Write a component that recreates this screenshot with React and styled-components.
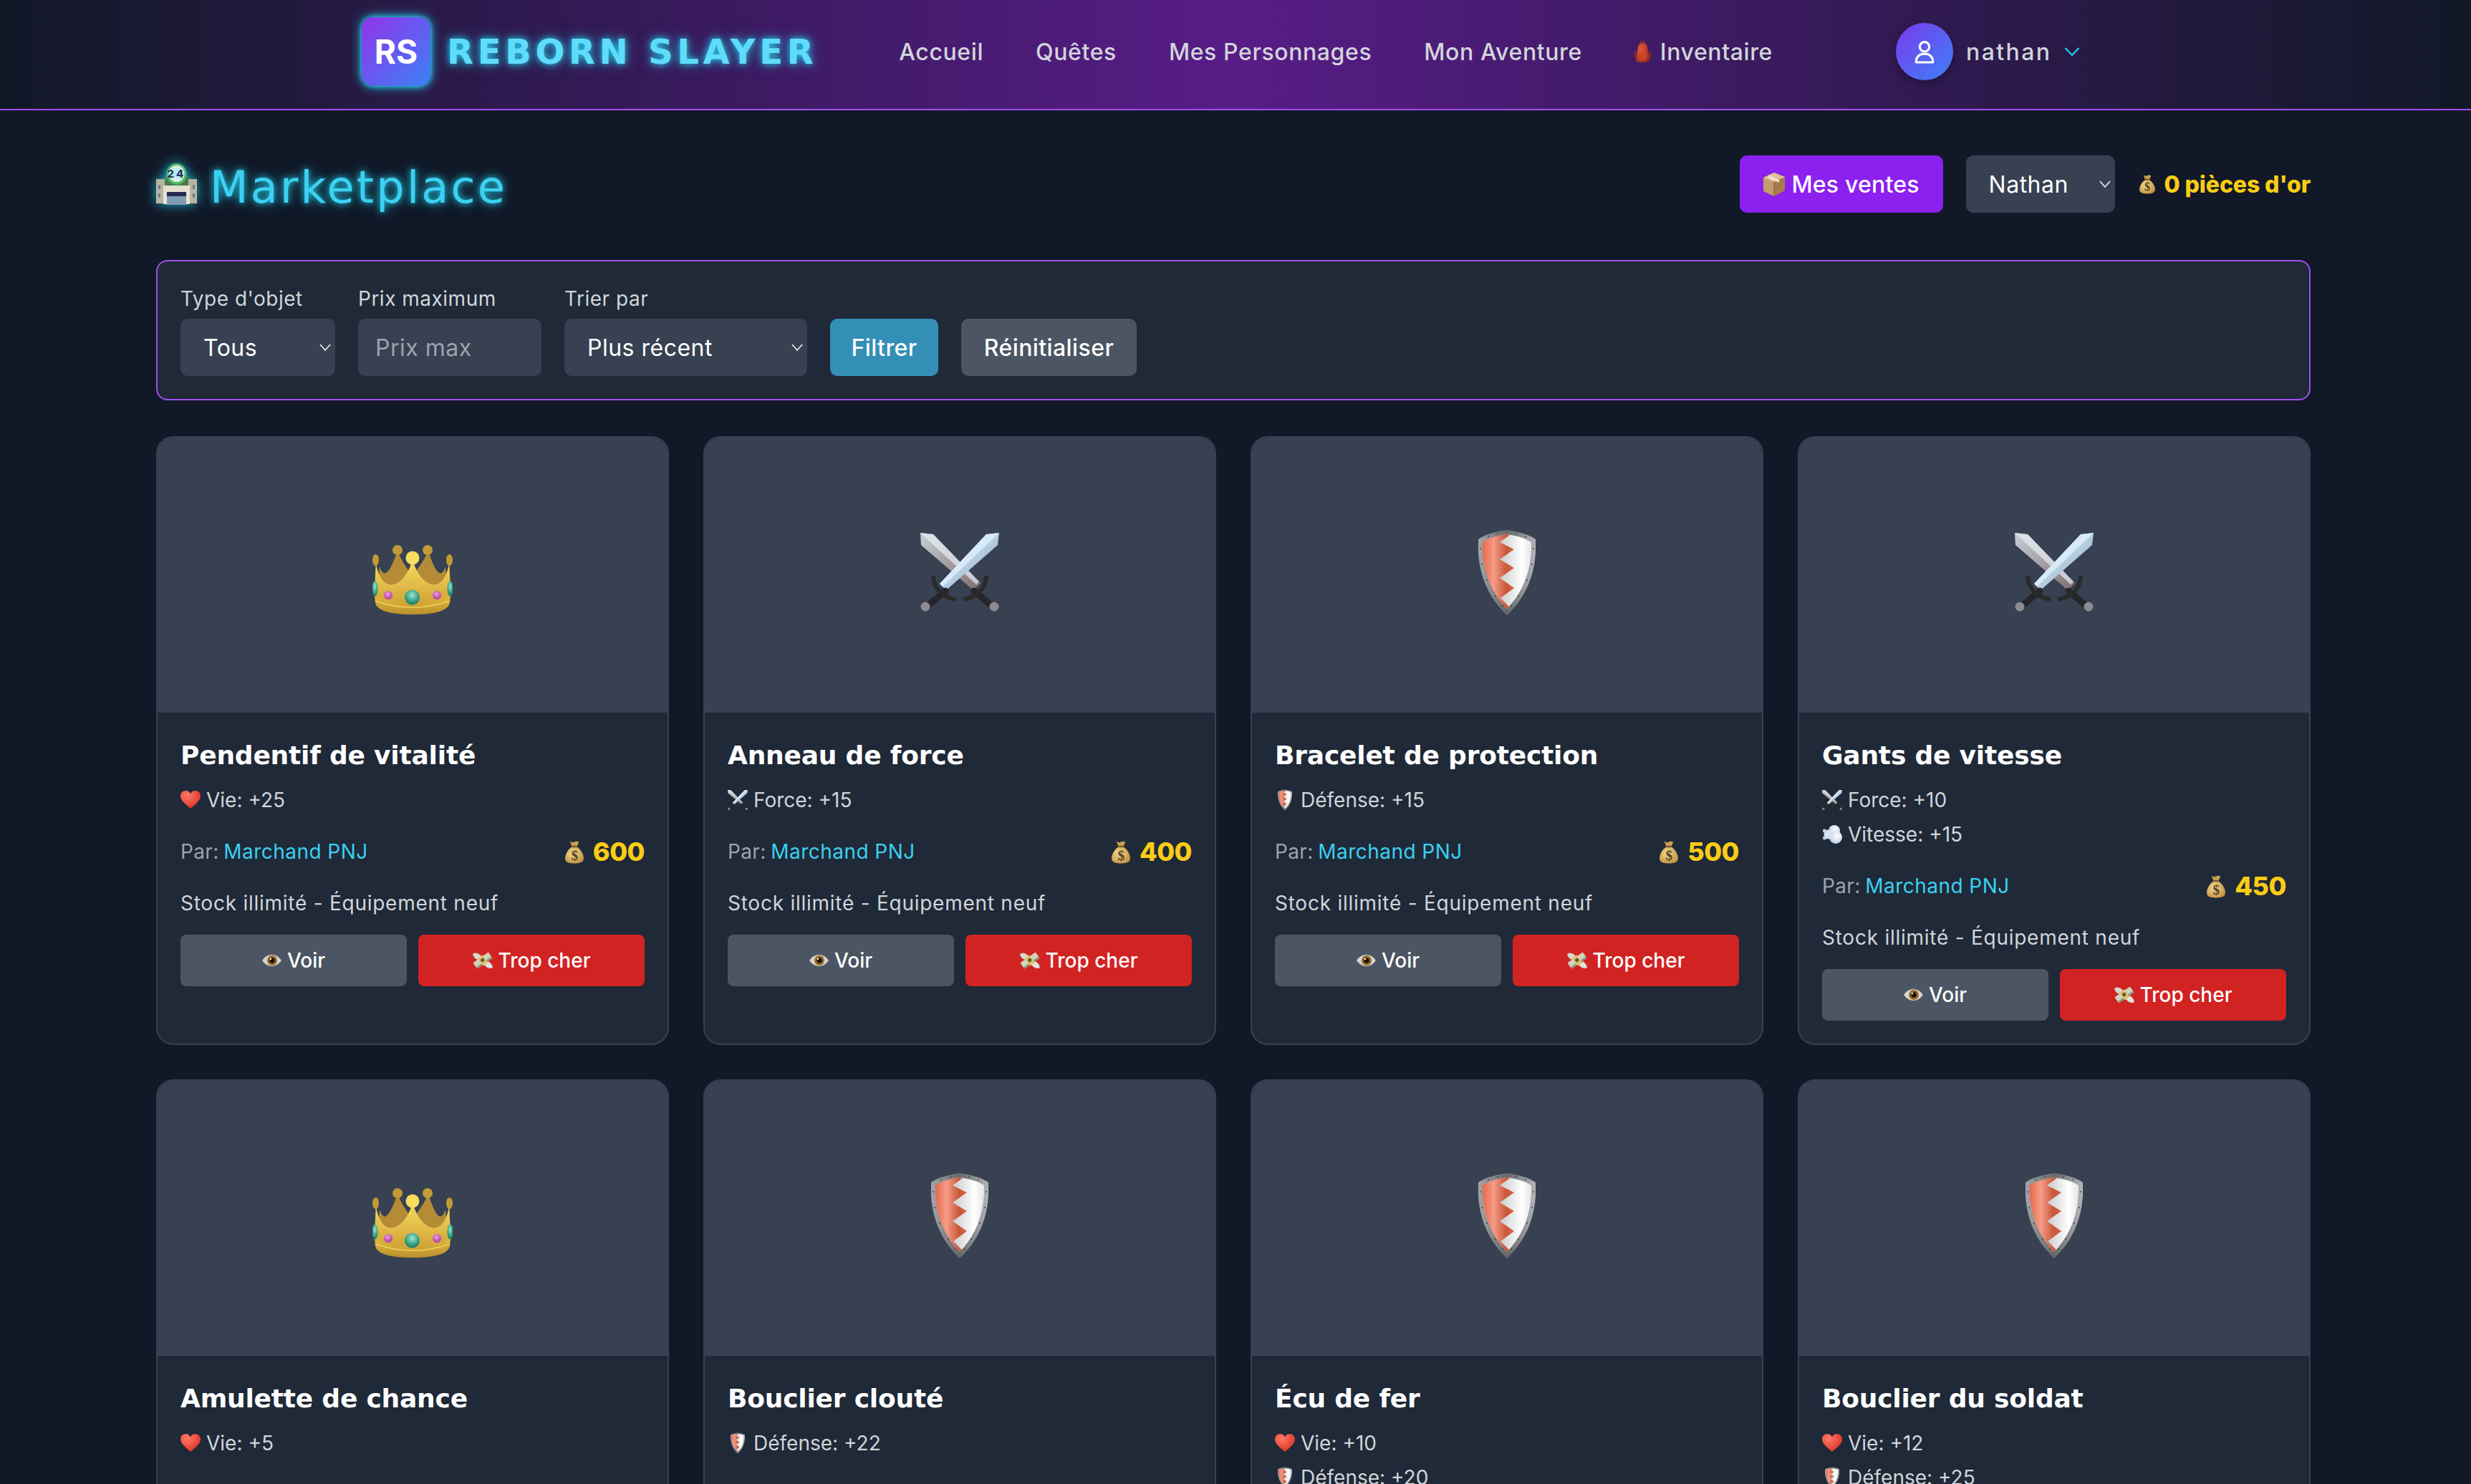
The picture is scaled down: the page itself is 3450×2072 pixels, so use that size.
import React from "react";
import styled, { createGlobalStyle } from "styled-components";

const SANS = `Inter, "Noto Sans", sans-serif`;
const DISPLAY = `"DejaVu Sans", sans-serif`;

const Global = createGlobalStyle`
  html, body { margin: 0; padding: 0; background: #111827; }
  #root { height: 100vh; overflow: hidden; }
  * { box-sizing: border-box; }
`;

const Page = styled.div`
  font-family: ${SANS};
  color: #d1d5db;
  background: #111827;
  min-height: 100%;
`;
const Header = styled.header`
  height: 154px;
  display: flex;
  align-items: center;
  padding: 0 0 8px 505px;
  border-bottom: 2px solid #a24ff0;
  background: linear-gradient(90deg, #111827, #581c87, #111827);
`;
const Logo = styled.div`
  display: flex;
  align-items: center;
  gap: 23px;
  margin-right: 114px;
`;
const Badge = styled.div`
  width: 96px;
  height: 96px;
  border-radius: 16px;
  display: flex;
  align-items: center;
  justify-content: center;
  color: #fff;
  font: 700 46px ${SANS};
  background: linear-gradient(135deg, #9333ea, #3b82f6);
  box-shadow: 0 0 16px #22d3ee, 0 0 6px #22d3ee;
`;
const Brand = styled.div`
  font: 700 48px ${DISPLAY};
  letter-spacing: 5.7px;
  color: #60dcfb;
  text-shadow: 0 0 10px #22d3ee, 0 0 20px rgba(34, 211, 238, 0.5);
  white-space: nowrap;
`;
const Nav = styled.nav`
  display: flex;
  gap: 73px;
  margin-right: 172px;
`;
const NavLink = styled.a`
  display: flex;
  align-items: center;
  gap: 13px;
  font-size: 32px;
  font-weight: 500;
  letter-spacing: 0.6px;
  color: #d1d5db;
  white-space: nowrap;
`;
const User = styled.div`
  display: flex;
  align-items: center;
  gap: 18px;
  font-size: 32px;
  font-weight: 500;
  letter-spacing: 2.4px;
  color: #d1d5db;
`;
const Avatar = styled.div`
  width: 80px;
  height: 80px;
  border-radius: 50%;
  display: flex;
  align-items: center;
  justify-content: center;
  background: linear-gradient(135deg, #7c3aed, #3b82f6);
  box-shadow: 0 4px 12px rgba(0, 0, 0, 0.35);
`;
const Main = styled.main`
  padding: 0 224px 0 218px;
`;
const TitleRow = styled.div`
  height: 209px;
  display: flex;
  align-items: center;
  justify-content: space-between;
  padding-bottom: 3px;
`;
const Title = styled.h1`
  margin: 0;
  display: flex;
  align-items: center;
  gap: 18px;
  font: 400 62px ${DISPLAY};
  letter-spacing: 3.2px;
  color: #3dd0f2;
  text-shadow: 0 0 10px #22d3ee, 0 0 20px rgba(34, 211, 238, 0.5);
`;
const TitleText = styled.span`
  padding-top: 8px;
`;
const TitleIcon = styled.span`
  display: flex;
  filter: drop-shadow(0 0 8px rgba(34, 211, 238, 0.8));
`;
const Actions = styled.div`
  display: flex;
  align-items: center;
`;
const SalesButton = styled.button`
  width: 284px;
  height: 80px;
  margin-right: 32px;
  border: 0;
  border-radius: 10px;
  display: flex;
  align-items: center;
  justify-content: center;
  gap: 8px;
  font: 500 32px ${SANS};
  letter-spacing: 0.2px;
  color: #fff;
  background: #8b20ef;
`;
const chevron = (color) =>
  `url("data:image/svg+xml,%3Csvg xmlns='http://www.w3.org/2000/svg' width='18' height='12' viewBox='0 0 18 12'%3E%3Cpath d='M2 2l7 8 7-8' fill='none' stroke='${color}' stroke-width='1.8'/%3E%3C/svg%3E")`;
const Select = styled.select`
  appearance: none;
  width: ${(p) => p.$w}px;
  height: 80px;
  padding: 0 0 0 32px;
  border: 0;
  border-radius: 10px;
  font: 400 32px ${SANS};
  letter-spacing: 0.5px;
  color: #fff;
  background: #374151 ${chevron("%23e5e7eb")} no-repeat right 5px center;
`;
const Gold = styled.div`
  margin-left: 34px;
  display: flex;
  align-items: center;
  gap: 13px;
  font-size: 32px;
  font-weight: 800;
  letter-spacing: -0.1px;
  color: #facc15;
  white-space: nowrap;
`;
const Filters = styled.form`
  height: 196px;
  margin-bottom: 50px;
  padding: 32px;
  display: flex;
  align-items: flex-end;
  gap: 32px;
  border: 2px solid #a24ff0;
  border-radius: 16px;
  background: #1f2937;
`;
const Field = styled.label`
  display: flex;
  flex-direction: column;
  gap: 8px;
  font-size: 28px;
  line-height: 40px;
  letter-spacing: 0.5px;
  color: #d1d5db;
`;
const Input = styled.input`
  width: 256px;
  height: 80px;
  padding: 0 24px;
  border: 0;
  border-radius: 10px;
  font: 400 32px ${SANS};
  letter-spacing: 0.5px;
  color: #fff;
  background: #374151;
  &::placeholder { color: #9ca3af; opacity: 1; }
`;
const FilterButton = styled.button`
  width: ${(p) => p.$w}px;
  height: 80px;
  border: 0;
  border-radius: 10px;
  font: 500 32px ${SANS};
  letter-spacing: 0.4px;
  color: #fff;
  background: ${(p) => (p.$primary ? "#338fb6" : "#4b5563")};
`;
const Grid = styled.div`
  display: grid;
  grid-template-columns: repeat(4, 716px);
  gap: 48px;
`;
const Card = styled.article`
  border: 2px solid #374151;
  border-radius: 24px;
  background: #1f2937;
  overflow: hidden;
  display: flex;
  flex-direction: column;
`;
const Art = styled.div`
  height: 384px;
  display: flex;
  align-items: center;
  justify-content: center;
  padding-bottom: 8px;
  background: #374151;
`;
const Body = styled.div`
  padding: 32px;
`;
const Name = styled.h3`
  margin: 0 0 14px;
  font: 700 36px/56px ${DISPLAY};
  letter-spacing: -0.2px;
  color: #fff;
  white-space: nowrap;
`;
const Stats = styled.ul`
  list-style: none;
  margin: 0 0 24px;
  padding: 0;
  display: flex;
  flex-direction: column;
  gap: 8px;
`;
const Stat = styled.li`
  display: flex;
  align-items: center;
  gap: 8px;
  font-size: 28px;
  line-height: 40px;
  color: #d1d5db;
`;
const StatIcon = styled.span`
  width: 28px;
  display: flex;
  justify-content: center;
`;
const SellerRow = styled.div`
  height: 56px;
  margin-bottom: 24px;
  display: flex;
  align-items: center;
  justify-content: space-between;
`;
const Seller = styled.div`
  font-size: 28px;
  letter-spacing: 0.35px;
  word-spacing: -1.5px;
  color: #9ca3af;
`;
const Merchant = styled.span`
  letter-spacing: 0.45px;
  word-spacing: 0;
  color: #3cd0f0;
`;
const Price = styled.div`
  display: flex;
  align-items: center;
  gap: 13px;
  font-size: 36px;
  font-weight: 800;
  letter-spacing: -0.5px;
  color: #facc15;
`;
const Stock = styled.p`
  margin: 0 0 24px;
  font-size: 28px;
  line-height: 40px;
  letter-spacing: 0.75px;
  color: #d1d5db;
`;
const Buttons = styled.div`
  display: grid;
  grid-template-columns: 1fr 1fr;
  gap: 16px;
`;
const CardButton = styled.button`
  height: 72px;
  border: 0;
  border-radius: 8px;
  display: flex;
  align-items: center;
  justify-content: center;
  gap: 8px;
  font: 500 28px ${SANS};
  color: #fff;
  background: ${(p) => (p.$red ? "#d22323" : "#4b5563")};
`;
const CrownSlot = styled.div`
  margin-top: 20px;
`;
const DefsHolder = styled.svg`
  display: block;
  width: 0;
  height: 0;
`;

function Defs() {
  return (
    <DefsHolder aria-hidden="true">
      <defs>
        <linearGradient id="g-gold" x1="0" y1="0" x2="0" y2="1">
          <stop offset="0" stopColor="#f7dc5e" />
          <stop offset="1" stopColor="#cfa136" />
        </linearGradient>
        <linearGradient id="g-band" x1="0" y1="0" x2="0" y2="1">
          <stop offset="0" stopColor="#e3b93f" />
          <stop offset="1" stopColor="#b9902c" />
        </linearGradient>
        <radialGradient id="g-gem" cx=".5" cy=".35" r=".7">
          <stop offset="0" stopColor="#9fe6cf" />
          <stop offset=".6" stopColor="#36a184" />
          <stop offset="1" stopColor="#1b6d59" />
        </radialGradient>
        <radialGradient id="g-pink" cx=".45" cy=".35" r=".7">
          <stop offset="0" stopColor="#f09be4" />
          <stop offset="1" stopColor="#a8329e" />
        </radialGradient>
        <linearGradient id="g-blade" x1="0" y1="0" x2="1" y2="1">
          <stop offset="0" stopColor="#e4f0fa" />
          <stop offset=".5" stopColor="#b6d0e4" />
          <stop offset="1" stopColor="#8a8f99" />
        </linearGradient>
        <linearGradient id="g-blade2" x1="0" y1="0" x2="1" y2="1">
          <stop offset="0" stopColor="#c8ced6" />
          <stop offset="1" stopColor="#7f6f6f" />
        </linearGradient>
        <linearGradient id="g-rim" x1="0" y1="0" x2="1" y2="0">
          <stop offset="0" stopColor="#a5a6a9" />
          <stop offset=".5" stopColor="#66676a" />
          <stop offset="1" stopColor="#b4b5b8" />
        </linearGradient>
        <linearGradient id="g-red" x1="0" y1="0" x2="1" y2="0">
          <stop offset="0" stopColor="#e8694a" />
          <stop offset=".35" stopColor="#f59c88" />
          <stop offset=".75" stopColor="#c9573a" />
          <stop offset="1" stopColor="#d8623f" />
        </linearGradient>
        <linearGradient id="g-silver" x1="0" y1="0" x2="1" y2="0">
          <stop offset="0" stopColor="#9fa1a5" />
          <stop offset=".8" stopColor="#ffffff" />
          <stop offset="1" stopColor="#e4e5e7" />
        </linearGradient>
        <radialGradient id="g-heart" cx=".35" cy=".25" r=".9">
          <stop offset="0" stopColor="#ff7a66" />
          <stop offset="1" stopColor="#d8261c" />
        </radialGradient>
        <radialGradient id="g-bag" cx=".4" cy=".4" r=".75">
          <stop offset="0" stopColor="#f3d88a" />
          <stop offset="1" stopColor="#b98a3c" />
        </radialGradient>
        <radialGradient id="g-pack" cx=".35" cy=".35" r=".8">
          <stop offset="0" stopColor="#e8573a" />
          <stop offset="1" stopColor="#8f2a1c" />
        </radialGradient>
        <radialGradient id="g-puff" cx=".6" cy=".4" r=".7">
          <stop offset="0" stopColor="#ffffff" />
          <stop offset="1" stopColor="#b3cbe0" />
        </radialGradient>
      </defs>
    </DefsHolder>
  );
}

const Glyph = styled.svg`
  display: block;
  flex: none;
`;

const Crown = ({ s = 112 }) => (
  <Glyph width={s} height={(s * 97) / 112} viewBox="0 0 112 97">
    <path d="M10 30C16 48 24 40 35 8 44 30 50 32 56 46 62 32 68 30 78 8 88 40 96 48 102 30L106 76H6Z" fill="#b58b36" />
    <circle cx="35" cy="7" r="7" fill="#c39a35" />
    <circle cx="77" cy="7" r="7" fill="#c39a35" />
    <path d="M56 22C50 40 41 53 28 56 17 57 9 47 5 28L3 72Q56 96 109 72L107 28C103 47 95 57 84 56 71 53 62 40 56 22Z" fill="url(#g-gold)" stroke="#f2d662" strokeWidth=".7" />
    <ellipse cx="4.500" cy="21" rx="4.500" ry="8" fill="#c39a35" />
    <ellipse cx="107.500" cy="21" rx="4.500" ry="8" fill="#c39a35" />
    <circle cx="56" cy="18" r="9.500" fill="#f6dd5f" />
    <path d="M3 71Q56 92 109 71L108 81Q104 97 56 97 8 97 4 81Z" fill="url(#g-band)" />
    <path d="M4 78Q56 96 108 78" fill="none" stroke="#f0d05a" strokeWidth="1.500" />
    <ellipse cx="3.500" cy="61" rx="4" ry="10.500" fill="url(#g-gem)" />
    <ellipse cx="108.500" cy="61" rx="4" ry="10.500" fill="url(#g-gem)" />
    <circle cx="22" cy="70" r="6" fill="url(#g-pink)" />
    <circle cx="90" cy="70" r="6" fill="url(#g-pink)" />
    <circle cx="55.500" cy="73" r="10.500" fill="url(#g-gem)" />
  </Glyph>
);

const Swords = ({ s = 110 }) => (
  <Glyph width={s} height={s} viewBox="0 0 110 110">
    <path d="M0 0 18 2 84 70 74 80 1 17Z" fill="url(#g-blade2)" />
    <path d="M0 0 18 2 82 68 78 72Z" fill="#e7eef5" opacity=".7" />
    <path d="M75 81 100 102" stroke="#26262a" strokeWidth="9" strokeLinecap="round" />
    <path d="M92 60C92 76 80 90 60 93" fill="none" stroke="#2a2a2c" strokeWidth="6" />
    <circle cx="103" cy="103" r="6.500" fill="#8e8a8f" />
    <path d="M110 0 108 17 36 80 27 71 92 2Z" fill="url(#g-blade)" />
    <path d="M110 0 92 2 27 71 31 75Z" fill="#d8eaf8" />
    <path d="M35 81 10 102" stroke="#26262a" strokeWidth="9" strokeLinecap="round" />
    <path d="M18 60C18 76 30 90 50 93" fill="none" stroke="#2a2a2c" strokeWidth="6" />
    <circle cx="7" cy="103" r="6.500" fill="#8e8a8f" />
  </Glyph>
);

const RIVETS = [
  [14, 9], [27, 5], [53, 5], [66, 9], [3, 26], [77, 26], [5, 48], [75, 48],
  [12, 70], [68, 70], [24, 92], [56, 92], [34, 106], [46, 106],
];

const Shield = ({ w = 80, h = 119 }) => (
  <Glyph width={w} height={h} viewBox="0 0 80 119">
    <path d="M40 0C55 2 70 6 80 13 82 55 70 90 40 119 10 90-2 55 0 13 10 6 25 2 40 0Z" fill="url(#g-rim)" />
    <path d="M40 6C53 8 65 11 74 17 75 53 64 85 40 110 16 85 5 53 6 17 15 11 27 8 40 6Z" fill="url(#g-silver)" />
    <path d="M44 7 30 17 50 27 30 41 50 53 30 67 50 81 31 95 43 107 40 110C16 85 5 53 6 17 15 11 27 8 40 6Z" fill="url(#g-red)" />
    {RIVETS.map(([x, y]) => (
      <circle key={`${x}-${y}`} cx={x} cy={y} r="1" fill="#3f4042" />
    ))}
  </Glyph>
);

const Heart = ({ s = 28 }) => (
  <Glyph width={s} height={s} viewBox="0 0 28 28">
    <path d="M14 26C8 21 0 15 0 8.500 0 4 3.500 1 7.500 1 10.500 1 13 3 14 5.500 15 3 17.500 1 20.500 1 24.500 1 28 4 28 8.500 28 15 20 21 14 26Z" fill="url(#g-heart)" />
  </Glyph>
);

const Bag = ({ w = 26, h = 33 }) => (
  <Glyph width={w} height={h} viewBox="0 0 27 33">
    <path d="M7 1 11 3 16 1 20 2 17 9H10Z" fill="#c9a04f" />
    <path d="M10 9H17C23 13 27 20 27 26 27 31 22 33 13.500 33 5 33 0 31 0 26 0 20 4 13 10 9Z" fill="url(#g-bag)" />
    <rect x="9.500" y="7.500" width="8" height="2.500" rx="1" fill="#7d5a25" />
    <text x="13.500" y="28" textAnchor="middle" fontFamily="'Liberation Serif', serif" fontSize="20" fill="#4f3d25">$</text>
  </Glyph>
);

const EyeIcon = () => (
  <Glyph width="27" height="18" viewBox="0 0 27 18">
    <path d="M0 9C4 3 9 1 13.500 1S23 3 27 9C23 15 18 17 13.500 17S4 15 0 9Z" fill="#d9d7d3" stroke="#85817b" strokeWidth=".6" />
    <circle cx="14" cy="9" r="7" fill="#9a6a26" />
    <circle cx="14" cy="9" r="3.800" fill="#1c1207" />
    <circle cx="12" cy="7" r="1.200" fill="#fff" />
  </Glyph>
);

const Money = () => (
  <Glyph width="28" height="26" viewBox="0 0 28 26">
    <path d="M12 7C8 2 3 2 0 4 1 8 3 11 8 12Z" fill="#d9d9d4" stroke="#a5a59e" strokeWidth=".5" />
    <path d="M16 19C20 24 25 25 28 23 27 18 24 15 20 14Z" fill="#e3e3de" stroke="#a5a59e" strokeWidth=".5" />
    <g transform="rotate(-35 14 13)">
      <rect x="1" y="8" width="26" height="10" rx="1" fill="#cfd3bd" />
      <rect x="1" y="15.500" width="26" height="2.500" fill="#8d9677" />
      <rect x="10" y="6.500" width="8" height="13" fill="#e4c266" />
      <circle cx="14" cy="12.500" r="2.600" fill="#5d5a39" />
    </g>
  </Glyph>
);

const Backpack = () => (
  <Glyph width="23" height="31" viewBox="0 0 23 31">
    <path d="M8 5C8 2 10 0 11.500 0S15 2 15 5" fill="none" stroke="#8f3a24" strokeWidth="1.500" />
    <path d="M5 8C6 4 9 3 11.500 3S17 4 18 8L21 28C19 31 4 31 2 28Z" fill="url(#g-pack)" />
    <path d="M0 16C0 13 3 13 3 16L3 26C1 26 0 24 0 22ZM23 16C23 13 20 13 20 16L20 26C22 26 23 24 23 22Z" fill="#7b2a1c" />
    <rect x="6" y="17" width="11" height="10" rx="3" fill="#c8432a" />
  </Glyph>
);

const Parcel = () => (
  <Glyph width="32" height="33" viewBox="0 0 32 33">
    <path d="M16 0 31 6 31 25 16 33Z" fill="#a67c4e" />
    <path d="M16 0 1 7 1 26 16 33Z" fill="#c69c6d" />
    <path d="M1 7 16 13 31 6 16 0Z" fill="#dcc09b" />
    <path d="M16 13V33" stroke="#8b6238" strokeWidth="1" />
    <path d="M8 3.500 23 10 23 14 8 7.500Z" fill="#efe2ce" />
  </Glyph>
);

const DashIcon = () => (
  <Glyph width="28" height="28" viewBox="0 0 28 28">
    <circle cx="17" cy="9" r="8" fill="url(#g-puff)" />
    <circle cx="19" cy="18" r="9" fill="url(#g-puff)" />
    <circle cx="9" cy="14" r="6.500" fill="#d6e4f0" />
    <circle cx="3.500" cy="9" r="2.500" fill="#c5d6e6" />
    <circle cx="3.500" cy="19" r="2.500" fill="#c5d6e6" />
  </Glyph>
);

const Store = () => (
  <Glyph width="57" height="59" viewBox="0 0 57 59">
    <rect x="0" y="22" width="57" height="34" fill="#b9b4a3" />
    <rect x="12" y="18" width="33" height="22" fill="#4f7a45" />
    <rect x="10" y="31" width="37" height="26" fill="#e8e2cf" />
    <rect x="15" y="40" width="27" height="6" fill="#262a55" />
    <rect x="15" y="46" width="27" height="12" fill="#7f9bb3" />
    <rect x="3" y="30" width="3" height="6" fill="#6a7f96" />
    <rect x="3" y="42" width="3" height="6" fill="#6a7f96" />
    <rect x="51" y="30" width="3" height="6" fill="#6a7f96" />
    <rect x="51" y="42" width="3" height="6" fill="#6a7f96" />
    <ellipse cx="28.500" cy="15" rx="14" ry="15" fill="#5cba5e" />
    <ellipse cx="28.500" cy="14.500" rx="11" ry="11.500" fill="#f4f4ef" />
    <text x="28.500" y="20" textAnchor="middle" fontFamily="Inter, sans-serif" fontWeight="800" fontSize="15" fill="#2d3160">24</text>
  </Glyph>
);

const UserIcon = () => (
  <Glyph width="40" height="40" viewBox="0 0 24 24" fill="none" stroke="#fff" strokeWidth="1.900" strokeLinecap="round" strokeLinejoin="round">
    <circle cx="12" cy="8" r="4" />
    <path d="M5 21v-1a6 6 0 0 1 6-6h2a6 6 0 0 1 6 6v1Z" />
  </Glyph>
);

const Caret = () => (
  <Glyph width="22" height="14" viewBox="0 0 22 14" fill="none" stroke="#22d3ee" strokeWidth="2.200">
    <path d="M1.500 2 11 12 20.500 2" />
  </Glyph>
);

const CROWN = (
  <CrownSlot>
    <Crown />
  </CrownSlot>
);
const SWORDS = <Swords />;
const SHIELD = <Shield />;
const STAT = {
  vie: [<Heart key="h" />, "Vie"],
  force: [<Swords key="s" s={28} />, "Force"],
  def: [<Shield key="d" w={20} h={30} />, "Défense"],
  vit: [<DashIcon key="v" />, "Vitesse"],
};

const ITEMS = [
  { name: "Pendentif de vitalité", art: CROWN, stats: [["vie", 25]], price: 600 },
  { name: "Anneau de force", art: SWORDS, stats: [["force", 15]], price: 400 },
  { name: "Bracelet de protection", art: SHIELD, stats: [["def", 15]], price: 500 },
  { name: "Gants de vitesse", art: SWORDS, stats: [["force", 10], ["vit", 15]], price: 450 },
  { name: "Amulette de chance", art: CROWN, stats: [["vie", 5]] },
  { name: "Bouclier clouté", art: SHIELD, stats: [["def", 22]] },
  { name: "Écu de fer", art: SHIELD, stats: [["vie", 10], ["def", 20]] },
  { name: "Bouclier du soldat", art: SHIELD, stats: [["vie", 12], ["def", 25]] },
];

function ItemCard({ item }) {
  return (
    <Card>
      <Art>{item.art}</Art>
      <Body>
        <Name>{item.name}</Name>
        <Stats>
          {item.stats.map(([k, v]) => (
            <Stat key={k}>
              <StatIcon>{STAT[k][0]}</StatIcon>
              {STAT[k][1]}: +{v}
            </Stat>
          ))}
        </Stats>
        <SellerRow>
          <Seller>
            Par: <Merchant>Marchand PNJ</Merchant>
          </Seller>
          <Price>
            <Bag />
            {item.price}
          </Price>
        </SellerRow>
        <Stock>Stock illimité - Équipement neuf</Stock>
        <Buttons>
          <CardButton>
            <EyeIcon /> Voir
          </CardButton>
          <CardButton $red>
            <Money /> Trop cher
          </CardButton>
        </Buttons>
      </Body>
    </Card>
  );
}

export default function App() {
  return (
    <Page>
      <Global />
      <Defs />
      <Header>
        <Logo>
          <Badge>RS</Badge>
          <Brand>REBORN SLAYER</Brand>
        </Logo>
        <Nav>
          <NavLink>Accueil</NavLink>
          <NavLink>Quêtes</NavLink>
          <NavLink>Mes Personnages</NavLink>
          <NavLink>Mon Aventure</NavLink>
          <NavLink>
            <Backpack /> Inventaire
          </NavLink>
        </Nav>
        <User>
          <Avatar>
            <UserIcon />
          </Avatar>
          nathan
          <Caret />
        </User>
      </Header>
      <Main>
        <TitleRow>
          <Title>
            <TitleIcon>
              <Store />
            </TitleIcon>
            <TitleText>Marketplace</TitleText>
          </Title>
          <Actions>
            <SalesButton>
              <Parcel /> Mes ventes
            </SalesButton>
            <Select $w={208} defaultValue="Nathan">
              <option>Nathan</option>
            </Select>
            <Gold>
              <Bag w={22} h={30} /> 0 pièces d'or
            </Gold>
          </Actions>
        </TitleRow>
        <Filters>
          <Field>
            Type d'objet
            <Select $w={216} defaultValue="Tous">
              <option>Tous</option>
            </Select>
          </Field>
          <Field>
            Prix maximum
            <Input placeholder="Prix max" />
          </Field>
          <Field>
            Trier par
            <Select $w={339} defaultValue="Plus récent">
              <option>Plus récent</option>
            </Select>
          </Field>
          <FilterButton type="button" $primary $w={151}>Filtrer</FilterButton>
          <FilterButton type="button" $w={245}>Réinitialiser</FilterButton>
        </Filters>
        <Grid>
          {ITEMS.map((item) => (
            <ItemCard key={item.name} item={item} />
          ))}
        </Grid>
      </Main>
    </Page>
  );
}
